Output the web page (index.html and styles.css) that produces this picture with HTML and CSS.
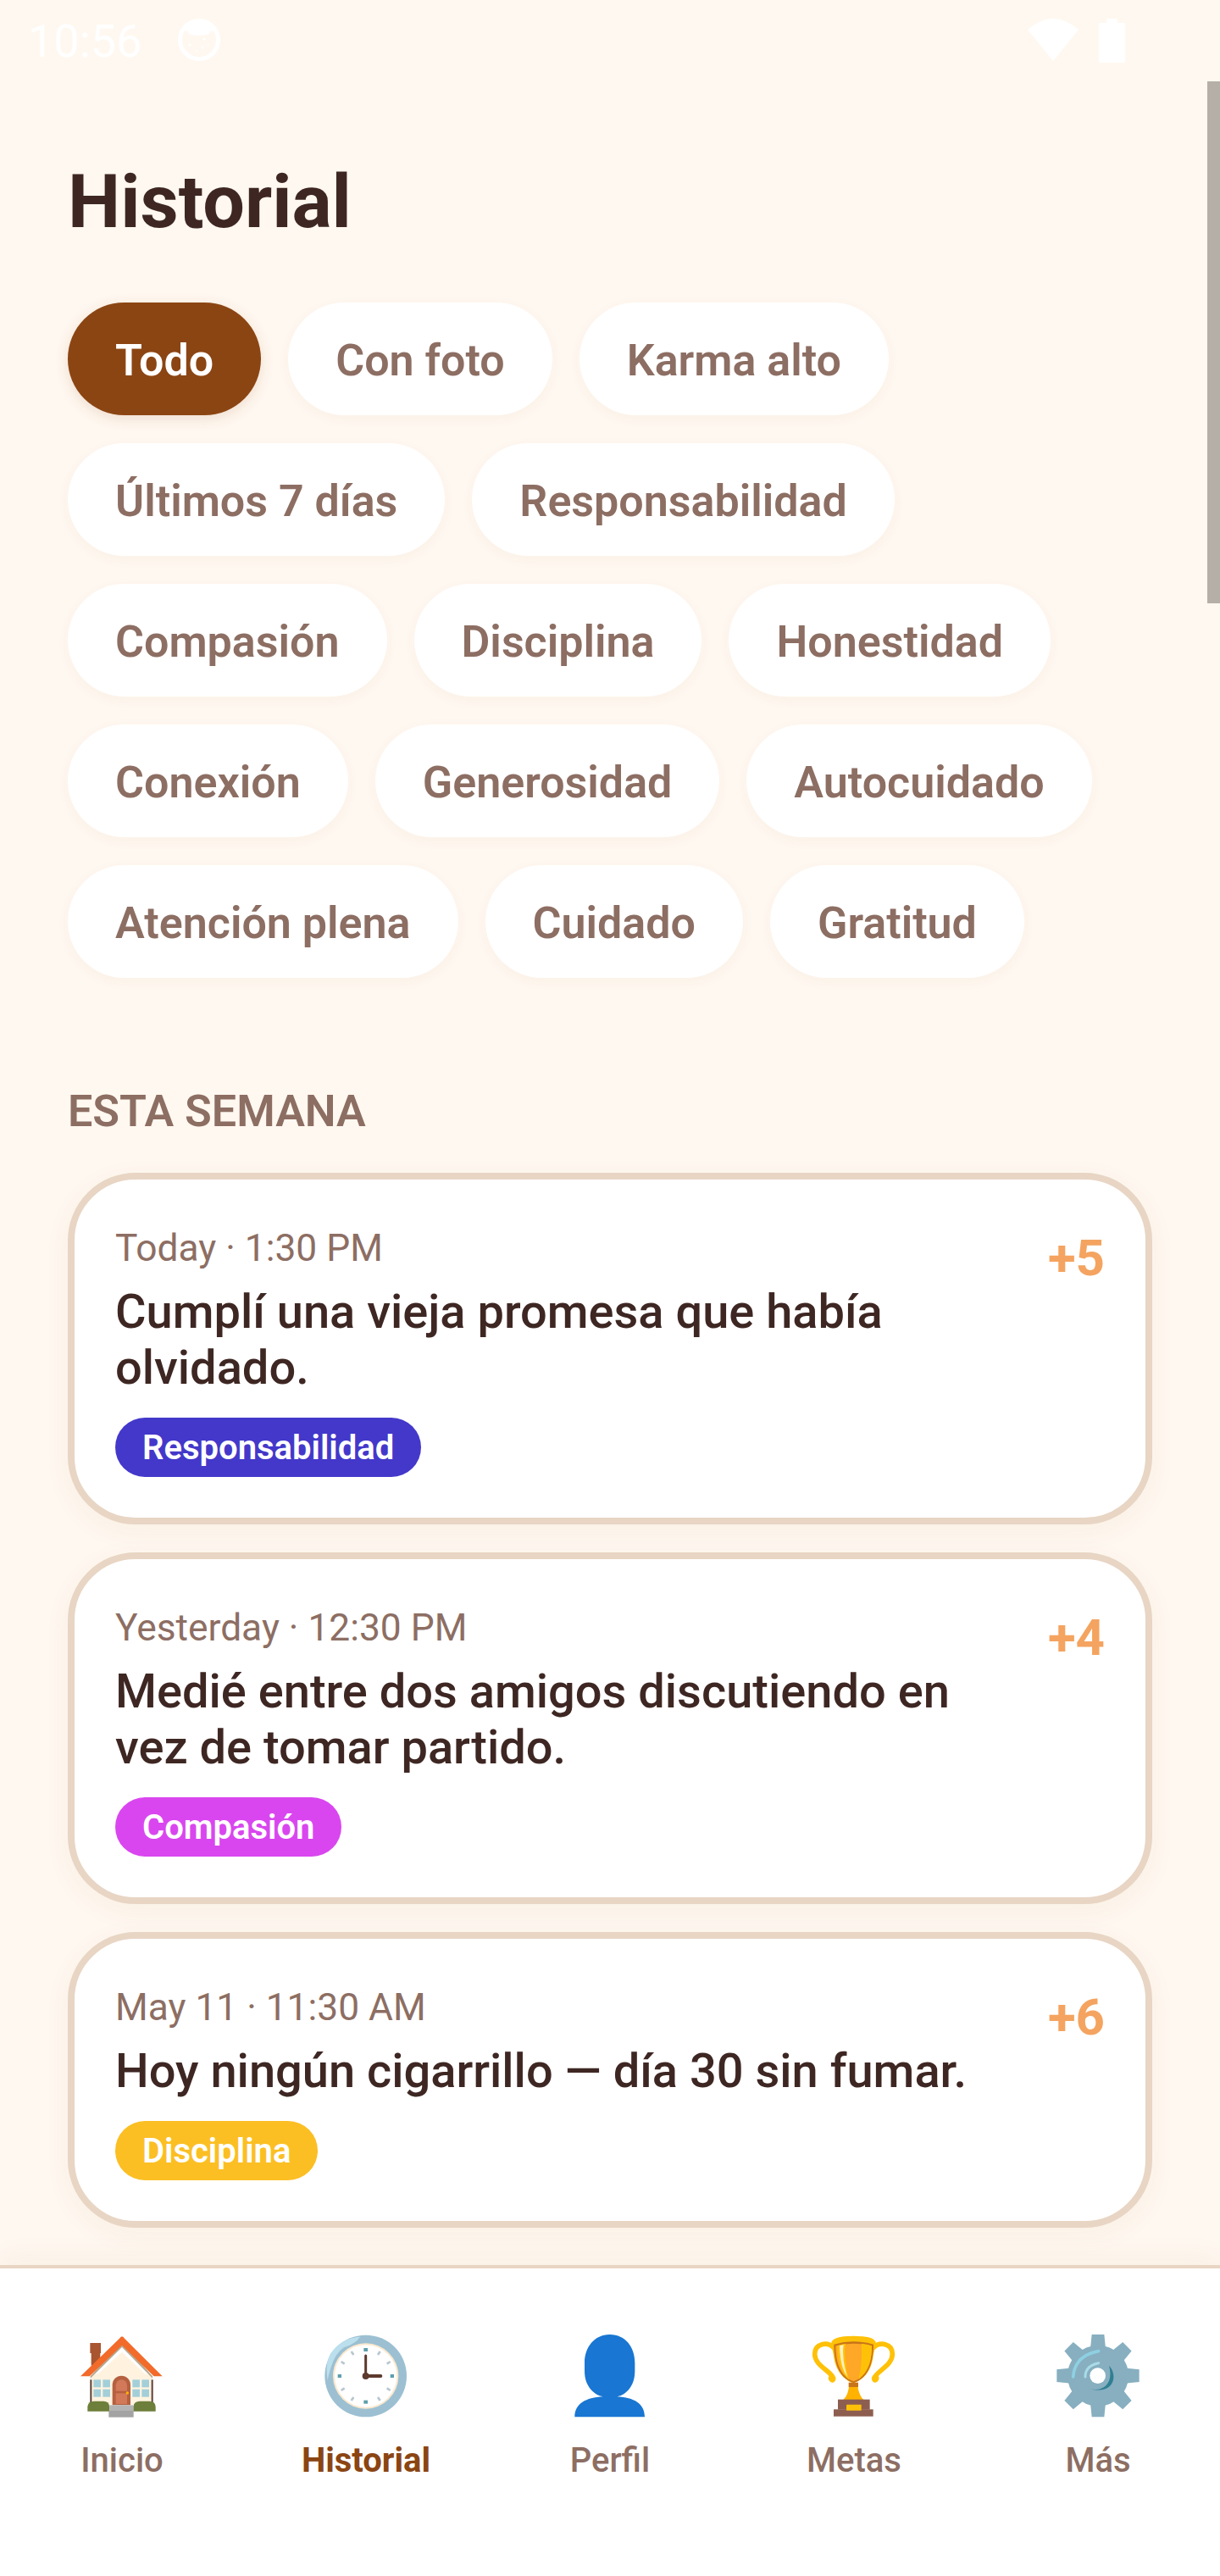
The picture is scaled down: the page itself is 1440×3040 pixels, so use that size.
FILE: index.html
```html
<!DOCTYPE html>
<html lang="es">
<head>
  <meta charset="UTF-8">
  <meta name="viewport" content="width=device-width, initial-scale=1.0">
  <title>Historial</title>
  <link rel="stylesheet" href="styles.css">
</head>
<body>
  <div class="screen">
    <div class="status-bar">
      <div class="status-left">
        <span class="clock-text">10:56</span>
        <svg class="status-app" width="50" height="50" viewBox="0 0 50 50">
          <circle cx="25" cy="25" r="22.5" fill="none" stroke="#fff" stroke-width="5"/>
          <path d="M6 11 Q25 -6 44 11 L41 15 L38 15 L37 18 Q25 22 13 18 L12 15 L9 15Z" fill="#fff"/>
          <circle cx="14" cy="31" r="1.6" fill="#fff"/>
          <circle cx="31" cy="24" r="1.6" fill="#fff"/>
          <circle cx="29" cy="34" r="1.4" fill="#fff"/>
          <circle cx="22" cy="38" r="1" fill="#fff"/>
          <circle cx="36" cy="31" r="1" fill="#fff"/>
        </svg>
      </div>
      <div class="status-right">
        <svg width="60" height="50" viewBox="0 0 60 50"><path d="M0 13 Q30 -13 60 13 L30 50Z" fill="#fff"/></svg>
        <svg width="31" height="52" viewBox="0 0 31 52"><path d="M9 0H22V5H29Q31 5 31 7V50Q31 52 29 52H2Q0 52 0 50V7Q0 5 2 5H9Z" fill="#fff"/></svg>
      </div>
    </div>

    <div class="scroll-thumb"></div>

    <main class="content">
      <h1 class="page-title">Historial</h1>

      <div class="chips">
        <span class="chip active">Todo</span>
        <span class="chip">Con foto</span>
        <span class="chip">Karma alto</span>
        <span class="chip">Últimos 7 días</span>
        <span class="chip">Responsabilidad</span>
        <span class="chip">Compasión</span>
        <span class="chip">Disciplina</span>
        <span class="chip">Honestidad</span>
        <span class="chip">Conexión</span>
        <span class="chip">Generosidad</span>
        <span class="chip">Autocuidado</span>
        <span class="chip">Atención plena</span>
        <span class="chip">Cuidado</span>
        <span class="chip">Gratitud</span>
      </div>

      <h2 class="section-label">ESTA SEMANA</h2>

      <div class="cards">
        <article class="card">
          <div class="card-body">
            <div class="card-meta">Today · 1:30 PM</div>
            <div class="card-title">Cumplí una vieja promesa que había olvidado.</div>
            <span class="tag tag-resp">Responsabilidad</span>
          </div>
          <div class="card-karma">+5</div>
        </article>

        <article class="card">
          <div class="card-body">
            <div class="card-meta">Yesterday · 12:30 PM</div>
            <div class="card-title">Medié entre dos amigos discutiendo en vez de tomar partido.</div>
            <span class="tag tag-comp">Compasión</span>
          </div>
          <div class="card-karma">+4</div>
        </article>

        <article class="card">
          <div class="card-body">
            <div class="card-meta">May 11 · 11:30 AM</div>
            <div class="card-title">Hoy ningún cigarrillo — día 30 sin fumar.</div>
            <span class="tag tag-disc">Disciplina</span>
          </div>
          <div class="card-karma">+6</div>
        </article>
      </div>
    </main>

    <nav class="bottom-nav">
      <div class="nav-item">
        <svg class="nav-icon" viewBox="-3 0 360 360">
          <rect x="64" y="60" width="38" height="36" fill="#A9552F"/>
          <rect x="68" y="90" width="32" height="50" fill="#A9552F"/>
          <rect x="65" y="170" width="220" height="108" fill="#FFF3E0"/>
          <path d="M177 75 L65 185 L65 178 L177 55 L285 178 L285 185Z" fill="#B8A88F"/>
          <path d="M177 92 L70 190 H280Z" fill="#FFF3E0"/>
          <path d="M177 37 Q182 38 186 44 L320 178 H290 L177 68 L62 178 H30 L168 44 Q172 38 177 37Z" fill="#F26B2A"/>
          <rect x="64" y="190" width="6" height="82" fill="#5D4037"/>
          <rect x="281" y="190" width="6" height="82" fill="#5D4037"/>
          <g fill="#A3CFD9">
            <rect x="76" y="190" width="26" height="27"/><rect x="109" y="190" width="26" height="27"/>
            <rect x="76" y="224" width="26" height="27"/><rect x="109" y="224" width="26" height="27"/>
            <rect x="214" y="190" width="26" height="27"/><rect x="247" y="190" width="26" height="27"/>
            <rect x="214" y="224" width="26" height="27"/><rect x="247" y="224" width="26" height="27"/>
          </g>
          <path d="M143 280 V208 A32 32 0 0 1 207 208 V280Z" fill="#B5603F"/>
          <path d="M155 230 V210 A20 20 0 0 1 195 210 V230Z" fill="#D2795A"/>
          <rect x="155" y="238" width="40" height="38" fill="#D2795A"/>
          <circle cx="196" cy="237" r="5" fill="#FFB300"/>
          <path d="M55 302 V285 Q58 266 78 266 H112 Q130 266 133 285 V302Z" fill="#6D7F3A"/>
          <path d="M217 302 V285 Q220 266 240 266 H275 Q294 266 296 285 V302Z" fill="#6D7F3A"/>
          <rect x="133" y="280" width="84" height="20" fill="#B4B4B4"/>
          <rect x="130" y="300" width="88" height="23" fill="#A3A3A3"/>
        </svg>
        <span class="nav-label">Inicio</span>
      </div>

      <div class="nav-item active">
        <svg class="nav-icon" viewBox="6 0 360 360">
          <circle cx="185" cy="177" r="145" fill="#9CC0D2"/>
          <path d="M165 38 Q150 62 108 76 Q68 100 50 192 Q38 120 70 85 Q105 42 165 38Z" fill="#BBDFEC"/>
          <circle cx="185" cy="177" r="116" fill="#FBE9CF"/>
          <circle cx="185" cy="177" r="110" fill="#fff"/>
          <g fill="#5F9EAC">
            <rect x="178" y="78" width="14" height="12"/><rect x="178" y="263" width="14" height="12"/>
            <rect x="86" y="171" width="13" height="12"/><rect x="272" y="171" width="13" height="12"/>
          </g>
          <g stroke="#B8C6CE" stroke-width="8" stroke-linecap="butt">
            <path d="M134 90 L142 102M236 90 L228 102M98 126 L110 134M272 126 L260 134"/>
            <path d="M98 228 L110 220M272 228 L260 220M134 264 L142 252M236 264 L228 252"/>
          </g>
          <path d="M185 177 V105" stroke="#5D3A2E" stroke-width="9" stroke-linecap="round"/>
          <path d="M185 177 H238" stroke="#5D3A2E" stroke-width="12" stroke-linecap="round"/>
          <circle cx="185" cy="177" r="12" fill="#5D3A2E"/>
        </svg>
        <span class="nav-label">Historial</span>
      </div>

      <div class="nav-item">
        <svg class="nav-icon" viewBox="0 0 360 360">
          <path d="M179 30 C235 30 268 75 268 130 V160 C268 215 235 245 205 250 C265 253 303 275 303 322 H55 C55 275 95 253 155 250 C125 245 90 215 90 160 V130 C90 75 125 30 179 30Z" fill="#1976D2"/>
        </svg>
        <span class="nav-label">Perfil</span>
      </div>

      <div class="nav-item">
        <svg class="nav-icon" viewBox="9 0 360 360">
          <path d="M116 76 C95 55 50 60 50 100 C50 140 108 160 116 185 C116 198 104 190 108 180" fill="none" stroke="#FFC107" stroke-width="17" stroke-linecap="round"/>
          <path d="M258 76 C280 55 325 60 325 100 C325 140 268 160 260 185 C260 198 272 190 268 180" fill="none" stroke="#FFC107" stroke-width="17" stroke-linecap="round"/>
          <path d="M172 205 H202 Q204 245 224 262 H150 Q170 245 172 205Z" fill="#FFB300"/>
          <path d="M108 62 Q110 35 187 35 Q266 35 267 62 L258 100 Q250 180 187 203 Q125 180 116 100Z" fill="#FFC107"/>
          <path d="M118 65 Q187 45 258 65 C258 130 240 185 187 201 C135 185 118 130 118 65Z" fill="#C8741A"/>
          <path d="M124 70 Q187 55 252 70 C252 130 235 178 187 196 C140 178 124 130 124 70Z" fill="#FFA726"/>
          <path d="M215 62 Q235 64 252 70 C252 120 242 160 205 188 Q220 130 215 62Z" fill="#FFC107"/>
          <path d="M130 70 Q145 64 160 62 Q150 110 172 190 Q132 160 130 70Z" fill="#FFC107"/>
          <path d="M138 70 L152 66 Q145 120 166 180 Q140 150 138 70Z" fill="#FFF0C2"/>
          <rect x="170" y="200" width="34" height="16" fill="#C8741A"/>
          <rect x="132" y="260" width="113" height="36" fill="#8D5E50"/>
          <rect x="117" y="295" width="140" height="25" fill="#8D5E50"/>
          <rect x="162" y="278" width="53" height="21" rx="2" fill="#FFC107"/>
        </svg>
        <span class="nav-label">Metas</span>
      </div>

      <div class="nav-item">
        <svg class="nav-icon" viewBox="3 0 360 360">
          <g fill="#87AFC0">
            <circle cx="183" cy="176" r="108"/>
            <path d="M155 90 L161 30 H205 L211 90Z"/>
            <path d="M155 90 L161 30 H205 L211 90Z" transform="rotate(45 183 176)"/>
            <path d="M155 90 L161 30 H205 L211 90Z" transform="rotate(90 183 176)"/>
            <path d="M155 90 L161 30 H205 L211 90Z" transform="rotate(135 183 176)"/>
            <path d="M155 90 L161 30 H205 L211 90Z" transform="rotate(180 183 176)"/>
            <path d="M155 90 L161 30 H205 L211 90Z" transform="rotate(225 183 176)"/>
            <path d="M155 90 L161 30 H205 L211 90Z" transform="rotate(270 183 176)"/>
            <path d="M155 90 L161 30 H205 L211 90Z" transform="rotate(315 183 176)"/>
          </g>
          <path d="M95 180 Q100 105 185 89" fill="none" stroke="#8ED0E2" stroke-width="11" stroke-linecap="round"/>
          <path d="M138 180 Q138 140 185 131" fill="none" stroke="#A8DCE6" stroke-width="9" stroke-linecap="round"/>
          <path d="M222 140 C255 175 240 245 153 222 C200 235 240 205 222 140Z" fill="#2F7F93"/>
          <circle cx="182" cy="176" r="28" fill="#fff"/>
        </svg>
        <span class="nav-label">Más</span>
      </div>
    </nav>
  </div>
</body>

</html>
```

FILE: styles.css
```css
* {
  box-sizing: border-box;
}

body {
  margin: 0;
  background-color: #FFF8F0;
  font-family: Roboto, "Liberation Sans", sans-serif;
}

.screen {
  position: relative;
  display: flex;
  flex-direction: column;
  width: 1440px;
  height: 3040px;
  overflow: hidden;
}

.status-bar {
  display: flex;
  justify-content: space-between;
  height: 96px;
  padding: 22px 112px 0 33px;
  color: #fff;
}

.status-left {
  display: flex;
  align-items: flex-start;
  gap: 43px;
}

.clock-text {
  font-size: 54px;
  line-height: 54px;
}

.status-right {
  display: flex;
  align-items: flex-start;
  gap: 24px;
}

.scroll-thumb {
  position: absolute;
  top: 96px;
  right: 0;
  width: 15px;
  height: 616px;
  background-color: #B5AFA7;
}

.content {
  flex: 1;
  padding: 92px 80px 0;
}

.page-title {
  margin: 0 0 69px;
  font-size: 88px;
  line-height: 100px;
  font-weight: 700;
  color: #3E2723;
}

.chips {
  display: flex;
  flex-wrap: wrap;
  gap: 33px 32px;
}

.chip {
  padding: 38px 56px 34px;
  font-size: 52px;
  line-height: 61px;
  font-weight: 600;
  color: #8D6E63;
  background-color: #fff;
  border-radius: 70px;
  box-shadow: 0 4px 16px rgba(139, 69, 19, 0.04);
}

.chip.active {
  color: #fff;
  background-color: #8B4513;
  box-shadow: 0 4px 16px rgba(139, 69, 19, 0.15);
}

.section-label {
  margin: 128px 0 42px;
  font-size: 52px;
  line-height: 60px;
  font-weight: 600;
  color: #8D6E63;
}

.cards {
  display: flex;
  flex-direction: column;
  gap: 33px;
}

.card {
  display: flex;
  align-items: flex-start;
  gap: 24px;
  padding: 48px;
  background-color: #fff;
  border: 8px solid #E8D5C4;
  border-radius: 80px;
  box-shadow: 0 8px 32px rgba(139, 69, 19, 0.05);
}

.card-body {
  flex: 1;
}

.card-meta {
  margin-bottom: 9px;
  font-size: 44.3px;
  line-height: 66px;
  color: #8D6E63;
}

.card-title {
  margin-bottom: 26px;
  font-size: 56px;
  line-height: 66px;
  font-weight: 500;
  color: #3E2723;
}

.tag {
  display: inline-block;
  height: 70px;
  padding: 0 32px;
  font-size: 40px;
  line-height: 72px;
  font-weight: 600;
  color: #fff;
  border-radius: 35px;
  vertical-align: top;
}

.tag-resp {
  background-color: #4338CA;
}

.tag-comp {
  background-color: #D946EF;
}

.tag-disc {
  background-color: #FBBF24;
}

.card-karma {
  margin-top: 12px;
  font-size: 60px;
  line-height: 66px;
  font-weight: 700;
  color: #F4A460;
}

.bottom-nav {
  display: flex;
  height: 367px;
  padding-top: 68px;
  background-color: #fff;
  border-top: 4px solid #E8D5C4;
  box-shadow: 0 -8px 32px rgba(139, 69, 19, 0.05);
}

.nav-item {
  flex: 1;
  display: flex;
  flex-direction: column;
  align-items: center;
}

.nav-icon {
  width: 120px;
  height: 120px;
}

.nav-label {
  margin-top: 15px;
  font-size: 40px;
  line-height: 48px;
  font-weight: 500;
  color: #8D6E63;
}

.nav-item.active .nav-label {
  font-weight: 700;
  color: #8B4513;
}
```
